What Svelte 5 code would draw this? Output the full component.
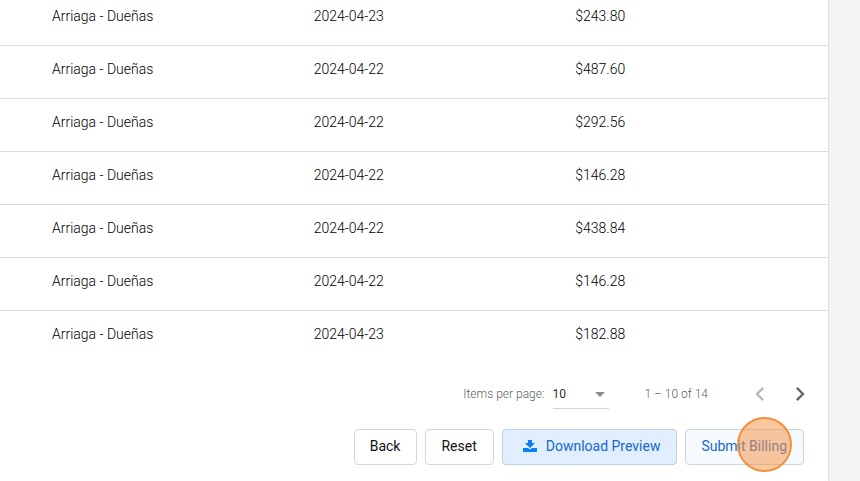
<script>
  const rows = [
    { name: 'Arriaga - Dueñas', date: '2024-04-23', amount: '$243.80' },
    { name: 'Arriaga - Dueñas', date: '2024-04-22', amount: '$487.60' },
    { name: 'Arriaga - Dueñas', date: '2024-04-22', amount: '$292.56' },
    { name: 'Arriaga - Dueñas', date: '2024-04-22', amount: '$146.28' },
    { name: 'Arriaga - Dueñas', date: '2024-04-22', amount: '$438.84' },
    { name: 'Arriaga - Dueñas', date: '2024-04-22', amount: '$146.28' },
    { name: 'Arriaga - Dueñas', date: '2024-04-23', amount: '$182.88' }
  ];
  let pageSize = $state('10');
</script>

<main class="card">
  <table>
    <colgroup>
      <col class="wide" />
      <col class="wide" />
      <col />
    </colgroup>
    <tbody>
      {#each rows as row}
        <tr>
          <td>{row.name}</td>
          <td>{row.date}</td>
          <td>{row.amount}</td>
        </tr>
      {/each}
    </tbody>
  </table>

  <div class="paginator">
    <label for="page-size">Items per page:</label>
    <div class="select">
      <select id="page-size" bind:value={pageSize}>
        <option>10</option>
        <option>25</option>
        <option>50</option>
      </select>
      <svg class="caret" viewBox="0 0 10 5" aria-hidden="true"><path d="M0 0h10L5 5z" /></svg>
    </div>
    <span class="range">1 – 10 of 14</span>
    <button class="page" type="button" aria-label="Previous page" disabled>
      <svg viewBox="0 0 24 24"><path d="M15.41 7.41 14 6l-6 6 6 6 1.41-1.41L10.83 12z" /></svg>
    </button>
    <button class="page" type="button" aria-label="Next page">
      <svg viewBox="0 0 24 24"><path d="M10 6 8.59 7.41 13.17 12l-4.58 4.59L10 18l6-6z" /></svg>
    </button>
  </div>

  <div class="actions">
    <button class="action" type="button">Back</button>
    <button class="action" type="button">Reset</button>
    <button class="action download" type="button">
      <svg viewBox="0 0 14 12" aria-hidden="true">
        <path d="M5 0h4v3h3L7 8 2 3h3zM0 8h5L7 9.500 9 8H14v4H0z" />
      </svg>
      Download Preview
    </button>
    <button class="action submit" type="button">
      Submit Billing
      <span class="pointer"></span>
    </button>
  </div>
</main>

<style>
  :global(body) {
    background: #f4f4f4;
  }
  .card {
    box-sizing: border-box;
    min-height: 100vh;
    margin-right: 32px;
    padding-bottom: 16px;
    background: #fff;
    box-shadow: 0 0 2px rgba(0, 0, 0, 0.25);
    font-family: Roboto, sans-serif;
    font-size: 14px;
    color: rgba(0, 0, 0, 0.87);
  }
  table {
    width: 100%;
    table-layout: fixed;
    border-collapse: separate;
    border-spacing: 0;
    font-weight: 300;
    color: #000;
  }
  .wide {
    width: 31.6%;
  }
  td {
    padding: 13px 0 19px 52px;
    line-height: 20px;
    border-bottom: 1px solid #dcdcdc;
  }
  tr:first-child td {
    padding-top: 6px;
  }
  tr:last-child td {
    border-bottom: 0;
  }
  .paginator {
    display: flex;
    align-items: center;
    justify-content: flex-end;
    height: 56px;
    margin-top: 3px;
    padding-right: 8px;
    font-size: 12px;
    font-weight: 300;
    color: rgba(0, 0, 0, 0.7);
  }
  .select {
    position: relative;
    width: 56px;
    margin: 0 36px 0 8px;
  }
  select {
    display: block;
    width: 100%;
    height: 30px;
    padding: 0;
    border: 0;
    border-bottom: 1px solid #d6d6d6;
    appearance: none;
    background: none;
    font: 12px Roboto, sans-serif;
    color: rgba(0, 0, 0, 0.87);
  }
  .caret {
    position: absolute;
    right: 4px;
    top: 13px;
    width: 10px;
    height: 5px;
    fill: #8a8a8a;
    pointer-events: none;
  }
  .range {
    margin-right: 32px;
  }
  .page {
    display: grid;
    place-items: center;
    width: 40px;
    height: 40px;
    padding: 0;
    border: 0;
    background: none;
  }
  .page svg {
    width: 28px;
    height: 28px;
    fill: #666;
  }
  .page:disabled svg {
    fill: #b8b8b8;
  }
  .actions {
    display: flex;
    justify-content: flex-end;
    gap: 8px;
    padding: 7px 24px 0;
  }
  .action {
    position: relative;
    display: flex;
    align-items: center;
    height: 36px;
    padding: 0 16px 2px 15px;
    border: 1px solid #d4d6d9;
    border-radius: 4px;
    background: #fff;
    font: 450 14px Roboto, sans-serif;
    color: #111;
    white-space: nowrap;
  }
  .download {
    padding-left: 20px;
    background: #e0eefe;
    border-color: #bccfe3;
    color: #1668cc;
  }
  .download svg {
    width: 14px;
    height: 12px;
    margin-right: 9px;
    fill: #087ff5;
  }
  .submit {
    background: #f5faff;
    border-color: #ccd5de;
    color: #1668cc;
  }
  .pointer {
    box-sizing: border-box;
    position: absolute;
    right: 11px;
    top: -13px;
    width: 55px;
    height: 55px;
    border: 2px solid #f0913f;
    border-radius: 50%;
    background: rgba(248, 150, 70, 0.53);
  }
</style>
